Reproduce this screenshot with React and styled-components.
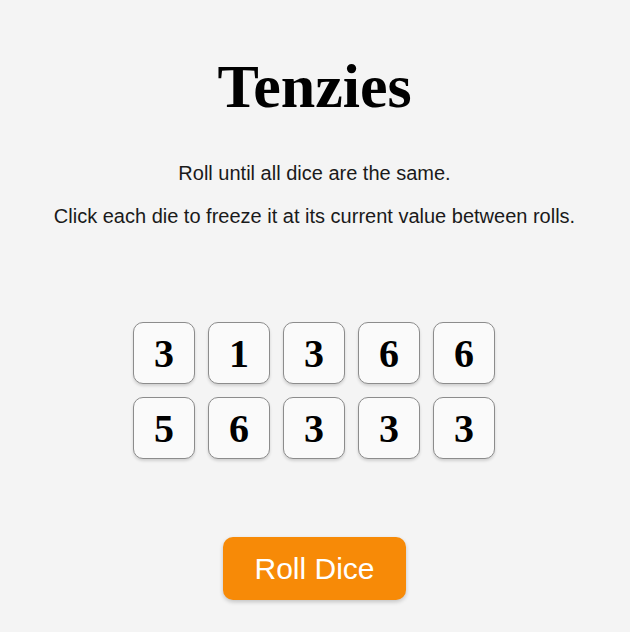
import React from "react";
import styled, { createGlobalStyle } from "styled-components";

const Global = createGlobalStyle`
  html, body { margin: 0; padding: 0; background: #f4f4f4; }
  body { font-family: "Liberation Sans", Arial, sans-serif; }
`;

const Main = styled.main`
  width: 629px;
  min-height: 632px;
  box-sizing: border-box;
  display: flex;
  flex-direction: column;
  align-items: center;
  padding-top: 53px;
`;

const Title = styled.h1`
  margin: 0;
  font-family: "Liberation Serif", "Times New Roman", serif;
  font-weight: 700;
  font-size: 62px;
  line-height: 67px;
  color: #000;
`;

const Instructions = styled.p`
  margin: ${(p) => p.$top}px 0 0;
  font-size: 20px;
  line-height: 23px;
  color: #1a1a1a;
  text-align: center;
`;

const DiceGrid = styled.div`
  margin: 94px 1px 0 0;
  display: grid;
  grid-template-columns: repeat(5, 62px);
  grid-auto-rows: 62px;
  gap: 13px;
`;

const Die = styled.button`
  box-sizing: border-box;
  width: 62px;
  height: 62px;
  padding: 0;
  border: 1px solid #8c8c8c;
  border-radius: 10px;
  background: #fafafa;
  box-shadow: 0 2px 3px rgba(0, 0, 0, 0.15);
  font-family: "Liberation Serif", "Times New Roman", serif;
  font-weight: 700;
  font-size: 40px;
  color: #000;
  display: flex;
  align-items: center;
  justify-content: center;
  cursor: pointer;
`;

const RollButton = styled.button`
  margin-top: 78px;
  border: none;
  border-radius: 10px;
  background: #f78a07;
  color: #fff;
  font-family: "Liberation Sans", Arial, sans-serif;
  font-size: 30px;
  line-height: 35px;
  padding: 14px 31px;
  box-shadow: 0 2px 4px rgba(0, 0, 0, 0.2);
  cursor: pointer;
`;

const values = [3, 1, 3, 6, 6, 5, 6, 3, 3, 3];

export default function App() {
  return (
    <>
      <Global />
      <Main>
        <Title>Tenzies</Title>
        <Instructions $top={42}>Roll until all dice are the same.</Instructions>
        <Instructions $top={20}>
          Click each die to freeze it at its current value between rolls.
        </Instructions>
        <DiceGrid>
          {values.map((v, i) => (
            <Die key={i}>{v}</Die>
          ))}
        </DiceGrid>
        <RollButton>Roll Dice</RollButton>
      </Main>
    </>
  );
}
